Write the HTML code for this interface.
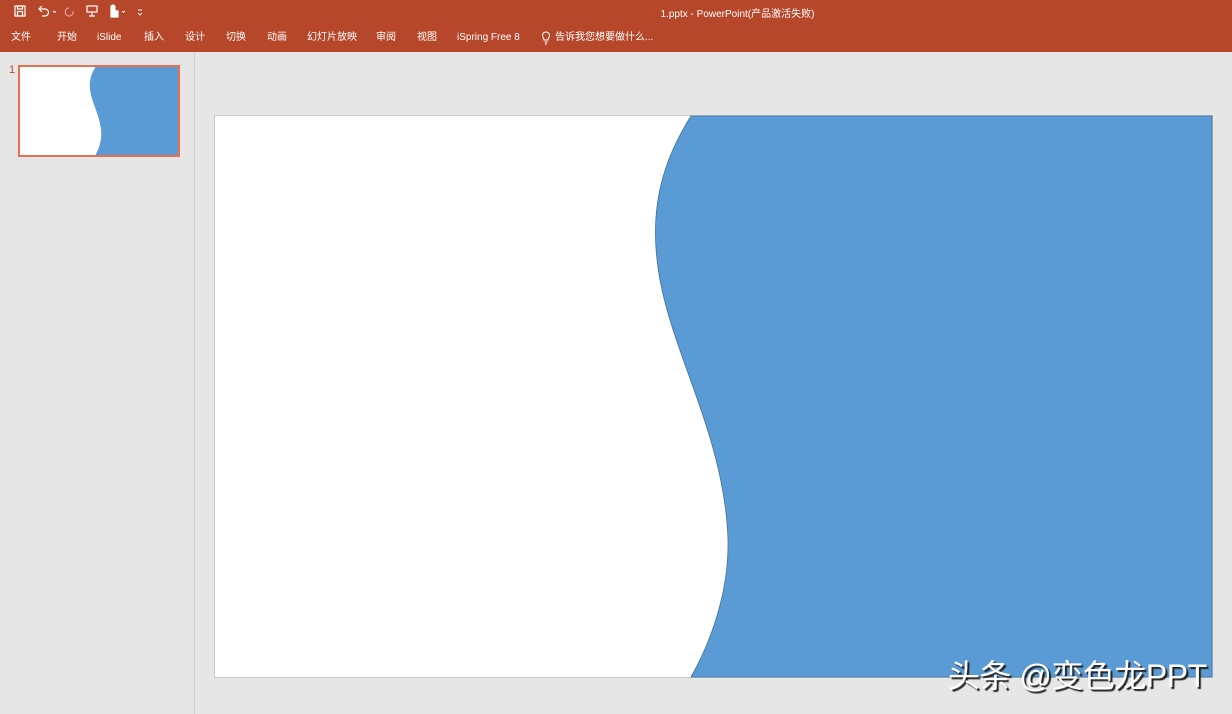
<!DOCTYPE html>
<html><head><meta charset="utf-8"><style>
body{margin:0;width:1232px;height:714px;overflow:hidden;background:#e6e6e6;font-family:"Liberation Sans","Noto Sans CJK SC",sans-serif;position:relative}
.top{position:absolute;left:0;top:0;width:1232px;height:52px;background:#b7472a;color:#fff}
.title{position:absolute;left:0;width:100%;top:9px;line-height:12px;text-align:center;font-size:10px;padding-left:243px;box-sizing:border-box}
.menu span{position:absolute;top:31px;font-size:10px;line-height:14px;height:14px}
.side{position:absolute;left:194px;top:52px;width:1px;height:662px;background:#d0d0d0}
.wm{position:absolute;left:948px;top:656px;font-size:32px;line-height:40px;color:#fff;text-shadow:2px 2px 1px #222;white-space:nowrap;letter-spacing:-0.5px}
</style></head><body>
<div class="top">
<div class="title">1.pptx - PowerPoint(产品激活失败)</div>
<svg style="position:absolute;left:12px;top:4px" width="140" height="15" viewBox="0 0 140 15" fill="none" stroke="#fff" stroke-width="1.2">
<rect x="3" y="2" width="10" height="10"/><rect x="5.5" y="2" width="5" height="3"/><rect x="5.5" y="7.5" width="5" height="4.5"/>
<path d="M28 5 h5 a3.5 3.5 0 0 1 0 7 h-3"/><path d="M30 2 l-3 3 l3 3"/>
<path d="M41 7 l1.5 1.5 l1.5-1.5" stroke-width="0.9"/>
<path d="M57 4 a4 4 0 1 0 4 3" stroke="#e8a090"/>
<rect x="75" y="2" width="10" height="6"/><path d="M80 8v4 M77 12h6"/>
<path d="M99 3 a2 2 0 0 1 4 0 v4 h3 v6 h-7 z" fill="#fff"/>
<path d="M110 7 l1.5 1.5 l1.5-1.5" stroke-width="0.9"/>
<path d="M126 6h4 M126 9 l2 2 l2-2" stroke-width="0.9"/>
</svg>
<div class="menu">
<span style="left:11px">文件</span><span style="left:57px">开始</span><span style="left:97px">iSlide</span><span style="left:144px">插入</span><span style="left:185px">设计</span><span style="left:226px">切换</span><span style="left:267px">动画</span><span style="left:307px">幻灯片放映</span><span style="left:376px">审阅</span><span style="left:417px">视图</span><span style="left:457px">iSpring Free 8</span><span style="left:555px">告诉我您想要做什么...</span>
</div>
<svg style="position:absolute;left:541px;top:31px" width="10" height="14" viewBox="0 0 10 14" fill="none" stroke="#fff" stroke-width="1"><path d="M3 9 C3 7 1.5 6.5 1.5 4.5 a3.5 3.5 0 0 1 7 0 C8.5 6.5 7 7 7 9 z M3.5 11h3 M4 13h2"/></svg>
</div>
<div style="position:absolute;left:9px;top:64px;font-size:11px;color:#b7472a">1</div>
<div style="position:absolute;left:18px;top:65px;width:158px;height:88px;border:2px solid #e8704f;background:#fff">
<svg width="158" height="88" viewBox="215 116 997 561" preserveAspectRatio="none" style="display:block"><path d="M691 116 C660 165 648 215 660 280 C675 360 725 440 728 540 C729 590 712 640 691 677 L1212 677 L1212 116 Z" fill="#5b9bd5"/></svg>
</div>
<div class="side"></div>
<svg style="position:absolute;left:214px;top:115px" width="999" height="563" viewBox="214 115 999 563">
<rect x="214.5" y="115.5" width="998" height="562" fill="#fff" stroke="#c8c8c8"/>
<path d="M691 116 C660 165 648 215 660 280 C675 360 725 440 728 540 C729 590 712 640 691 677 L1212 677 L1212 116 Z" fill="#5b9bd5" stroke="#41719c" stroke-width="0.8"/>
</svg>
<div class="wm">头条 @变色龙PPT</div>
</body></html>
